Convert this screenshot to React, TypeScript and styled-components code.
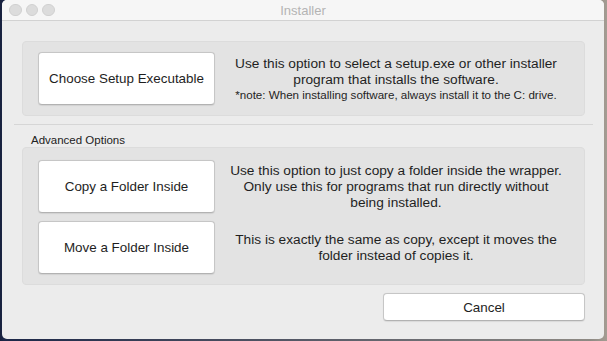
import styled, { createGlobalStyle } from "styled-components"

const GlobalStyle = createGlobalStyle`
  html, body {
    margin: 0;
    padding: 0;
    width: 607px;
    height: 341px;
    overflow: hidden;
    background: linear-gradient(90deg, #17203d 0px, #1c2748 4px, #8e8a84 590px, #a49c92 607px);
    font-family: "Liberation Sans", Arial, sans-serif;
  }
`

const Desktop = styled.div`
  display: flex;
  padding-left: 2px;
  height: 341px;
`

const Window = styled.div`
  width: 602px;
  height: 339px;
  background: #ececec;
  border-radius: 5px;
  overflow: hidden;
  display: flex;
  flex-direction: column;
`

const TitleBar = styled.div`
  display: grid;
  grid-template-columns: 1fr auto 1fr;
  align-items: center;
  height: 20px;
  background: #f6f6f6;
  border-bottom: 1px solid #d2d2d2;
  padding: 0 7px;
`

const Lights = styled.div`
  display: flex;
  gap: 4px;
`

const Light = styled.span`
  width: 12.5px;
  height: 12.5px;
  border-radius: 50%;
  background: #dcdcdc;
  border: 0.5px solid #d0d0d0;
  box-sizing: border-box;
`

const Title = styled.div`
  font-size: 13px;
  color: #b4b4b4;
`

const Content = styled.div`
  display: flex;
  flex-direction: column;
  padding: 20px 19px 0 20px;
`

const Panel = styled.div<{ $pad: string }>`
  display: grid;
  grid-template-columns: 177px 1fr;
  row-gap: 8px;
  align-items: center;
  background: #e3e3e3;
  border: 1px solid #dcdcdc;
  border-radius: 4px;
  padding: ${({ $pad }) => $pad};
`

const Button = styled.button<{ $h: number }>`
  height: ${({ $h }) => $h}px;
  background: #ffffff;
  border: 1px solid #c6c6c6;
  border-bottom-color: #b2b2b2;
  border-radius: 4px;
  font-family: "Liberation Sans", Arial, sans-serif;
  font-size: 13.4px;
  color: #1e1e1e;
  padding: 0;
  box-shadow: 0 0.5px 1px rgba(0, 0, 0, 0.08);
`

const Desc = styled.div`
  text-align: center;
  font-size: 13.7px;
  line-height: 16px;
  color: #1f1f1f;
  padding-left: 8px;
`

const Note = styled.div`
  font-size: 11.6px;
  line-height: 13px;
`

const Separator = styled.div`
  height: 1px;
  background: #d6d6d6;
  margin: 8px -8px 0 -8px;
`

const SectionLabel = styled.div`
  font-size: 11.5px;
  color: #222;
  padding: 8px 0 0 9px;
  height: 14px;
  line-height: 14px;
`

const Footer = styled.div`
  display: flex;
  justify-content: flex-end;
  padding-top: 8px;
`

const CancelButton = styled(Button)`
  width: 202px;
`

export default function App() {
  return (
    <>
      <GlobalStyle />
      <Desktop>
        <Window>
          <TitleBar>
            <Lights>
              <Light />
              <Light />
              <Light />
            </Lights>
            <Title>Installer</Title>
            <span />
          </TitleBar>
          <Content>
            <Panel $pad="10px 15px 10px 15px">
              <Button $h={53}>Choose Setup Executable</Button>
              <Desc>
                Use this option to select a setup.exe or other installer
                <br />
                program that installs the software.
                <Note>*note: When installing software, always install it to the C: drive.</Note>
              </Desc>
            </Panel>
            <Separator />
            <SectionLabel>Advanced Options</SectionLabel>
            <Panel $pad="12px 15px 10px 15px">
              <Button $h={53}>Copy a Folder Inside</Button>
              <Desc>
                Use this option to just copy a folder inside the wrapper.
                <br />
                Only use this for programs that run directly without
                <br />
                being installed.
              </Desc>
              <Button $h={53}>Move a Folder Inside</Button>
              <Desc>
                This is exactly the same as copy, except it moves the
                <br />
                folder instead of copies it.
              </Desc>
            </Panel>
            <Footer>
              <CancelButton $h={28}>Cancel</CancelButton>
            </Footer>
          </Content>
        </Window>
      </Desktop>
    </>
  )
}
